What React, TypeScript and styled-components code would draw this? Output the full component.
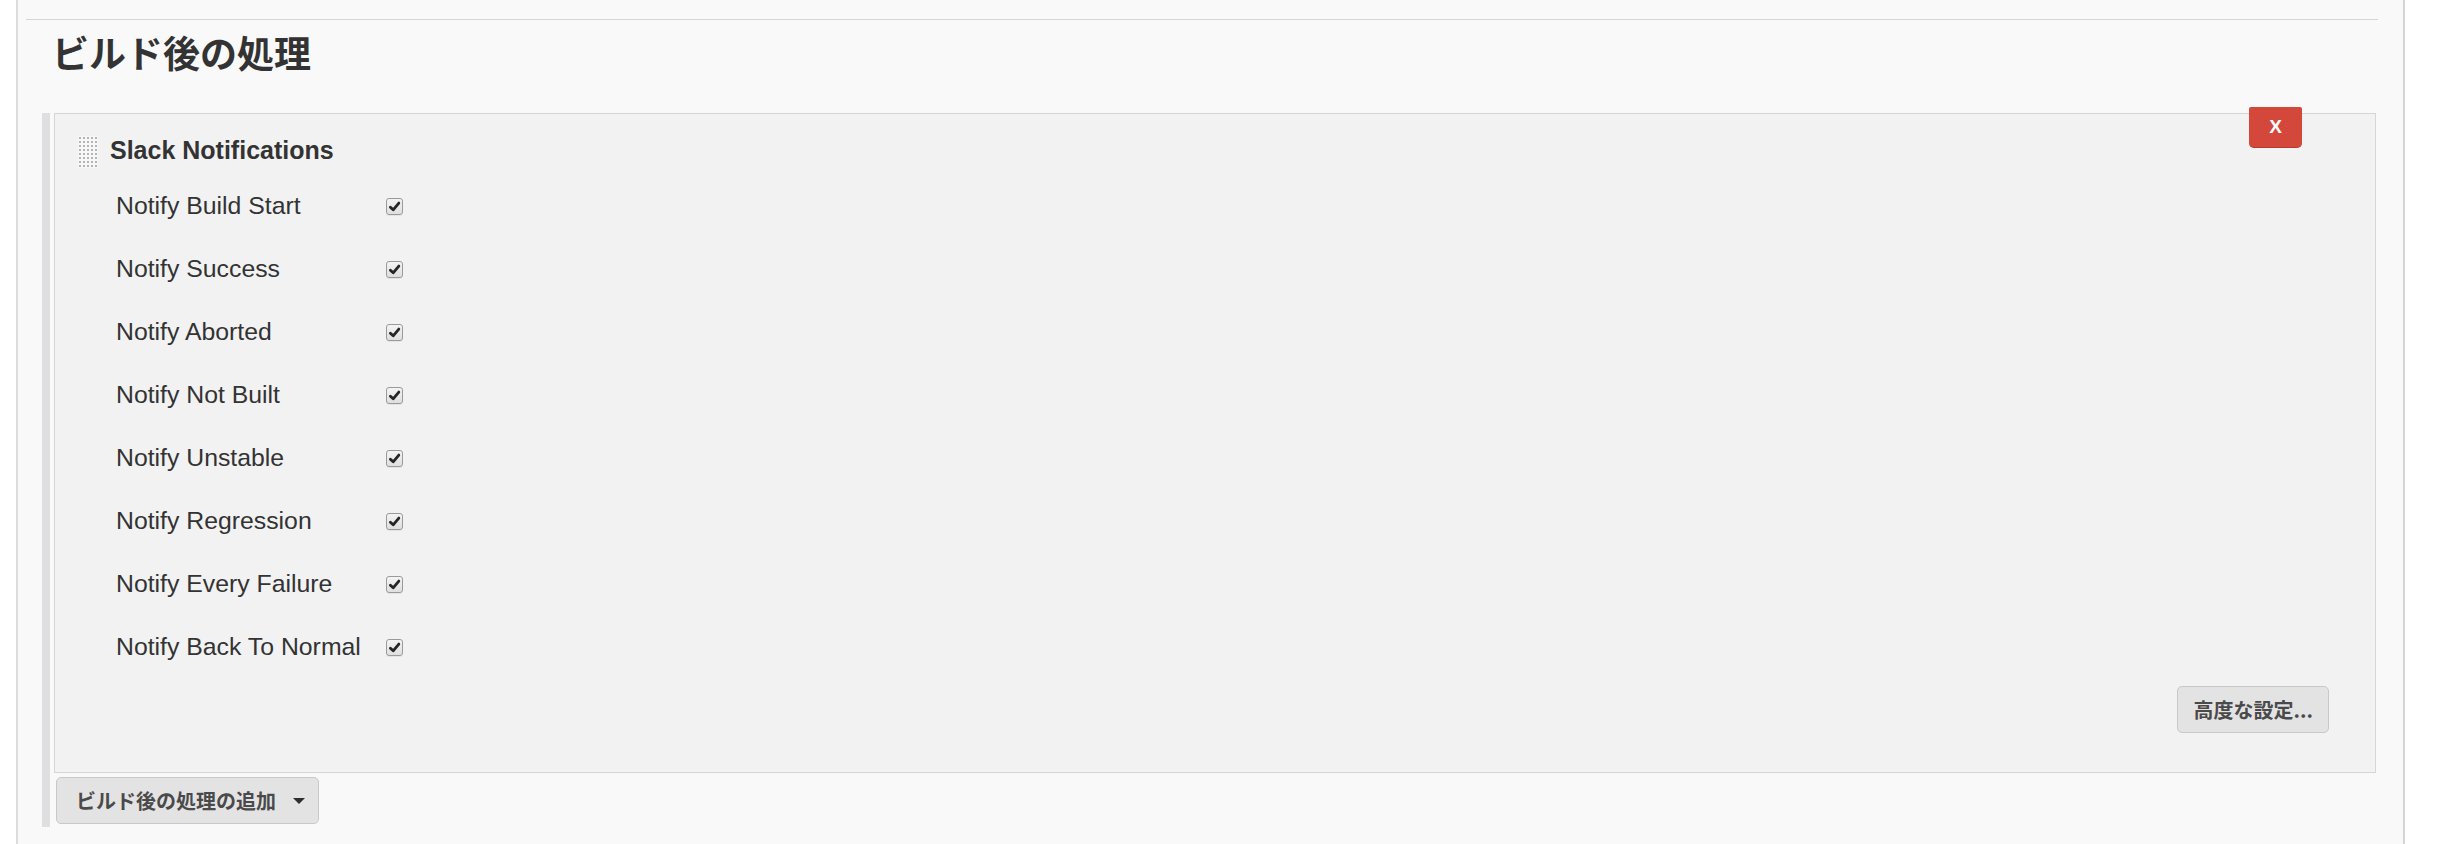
import React from "react";
import styled, { createGlobalStyle } from "styled-components";

const GlobalStyle = createGlobalStyle`
  html, body { margin: 0; padding: 0; background: #ffffff; }
  body {
    font-family: "Liberation Sans", "Noto Sans CJK JP", sans-serif;
    color: #333333;
  }
  * { box-sizing: border-box; }
`;

const Page = styled.div`
  padding-left: 16px;
`;

const Panel = styled.main`
  width: 2389px;
  min-height: 844px;
  background: #f9f9fa;
  border-left: 2px solid #dcdcde;
  border-right: 2px solid #d4d4d6;
  padding-top: 19px;
`;

const Rule = styled.hr`
  margin: 0 25px 0 8px;
  border: 0;
  height: 1px;
  background: #d6d6d8;
`;

const Heading = styled.h2`
  margin: 9.5px 0 0;
  padding-left: 34px;
  font-family: "Noto Sans CJK JP", "Liberation Sans", sans-serif;
  font-size: 37px;
  font-weight: 700;
  line-height: 44px;
  color: #333333;
`;

const Chunk = styled.section`
  margin: 39.5px 27px 0 24px;
  border-left: 8px solid #dfdfe1;
  padding: 0 0 3px 4px;
`;

const Box = styled.div`
  position: relative;
  border: 1px solid #d6d6d8;
  background: #f2f2f3;
  padding: 21px 0 39px;
`;

const DeleteButton = styled.button`
  position: absolute;
  top: -7px;
  right: 73px;
  width: 53px;
  height: 41px;
  border: 0;
  border-bottom: 1px solid #b53b2d;
  border-radius: 2px 2px 5px 5px;
  background: #d3483a;
  color: #ffffff;
  font-family: "Liberation Sans", sans-serif;
  font-size: 19px;
  font-weight: 700;
  padding: 0;
  cursor: pointer;
`;

const TitleRow = styled.div`
  display: flex;
  align-items: flex-start;
  gap: 12px;
  padding-left: 23px;
  height: 33px;
`;

const Handle = styled.span`
  display: block;
  width: 20px;
  height: 32px;
  margin-top: 1px;
  background-color: #f7f7f8;
  background-image: radial-gradient(circle, #b4b4b6 0.9px, transparent 1.3px);
  background-size: 4px 4px;
  background-position: 0 0;
`;

const Title = styled.h3`
  margin: 0;
  font-size: 25px;
  font-weight: 700;
  line-height: 30px;
  color: #333333;
`;

const Rows = styled.div`
  display: grid;
  grid-template-columns: 269.5px 17px;
  grid-auto-rows: 63px;
  align-items: center;
  margin-top: 6.5px;
  padding-left: 61px;
`;

const Label = styled.span`
  font-size: 24.8px;
  line-height: 30px;
  color: #333333;
  white-space: nowrap;
`;

const Check = styled.span`
  display: flex;
  align-items: center;
  justify-content: center;
  width: 17px;
  height: 17px;
  border: 1px solid #999a9c;
  border-radius: 3px;
  background: linear-gradient(#f4f4f4, #dfdfe0);
  box-shadow: 0 1px 0 rgba(0, 0, 0, 0.06);
`;

const AdvancedRow = styled.div`
  display: flex;
  justify-content: flex-end;
  padding-right: 46px;
  margin-top: 7.5px;
`;

const GreyButton = styled.button`
  display: inline-flex;
  align-items: center;
  height: 47px;
  border: 1px solid #c8c8ca;
  border-radius: 5px;
  background: #e3e3e4;
  color: #4a4a4a;
  font-family: "Noto Sans CJK JP", "Liberation Sans", sans-serif;
  font-size: 20px;
  font-weight: 700;
  cursor: pointer;
`;

const AdvancedButton = styled(GreyButton)`
  padding: 0 15px 0 16px;
`;

const AddButton = styled(GreyButton)`
  margin: 4px 0 0 2px;
  padding: 0 13px 0 19px;
  gap: 17px;
`;

const Caret = styled.span`
  width: 0;
  height: 0;
  border-left: 6px solid transparent;
  border-right: 6px solid transparent;
  border-top: 6px solid #2e2e2e;
`;

const items = [
  "Notify Build Start",
  "Notify Success",
  "Notify Aborted",
  "Notify Not Built",
  "Notify Unstable",
  "Notify Regression",
  "Notify Every Failure",
  "Notify Back To Normal",
];

const CheckMark = () => (
  <svg width="13" height="13" viewBox="0 0 12 12">
    <path
      d="M2.2 6.6 L4.8 9.1 L10 2.8"
      fill="none"
      stroke="#262626"
      strokeWidth="2.6"
      strokeLinecap="round"
      strokeLinejoin="round"
    />
  </svg>
);

export default function App() {
  return (
    <Page>
      <GlobalStyle />
      <Panel>
        <Rule />
        <Heading>ビルド後の処理</Heading>
        <Chunk>
          <Box>
            <DeleteButton type="button">X</DeleteButton>
            <TitleRow>
              <Handle />
              <Title>Slack Notifications</Title>
            </TitleRow>
            <Rows>
              {items.map((label) => (
                <React.Fragment key={label}>
                  <Label>{label}</Label>
                  <Check role="checkbox" aria-checked="true" aria-label={label}>
                    <CheckMark />
                  </Check>
                </React.Fragment>
              ))}
            </Rows>
            <AdvancedRow>
              <AdvancedButton type="button">高度な設定...</AdvancedButton>
            </AdvancedRow>
          </Box>
          <AddButton type="button">
            ビルド後の処理の追加
            <Caret />
          </AddButton>
        </Chunk>
      </Panel>
    </Page>
  );
}
